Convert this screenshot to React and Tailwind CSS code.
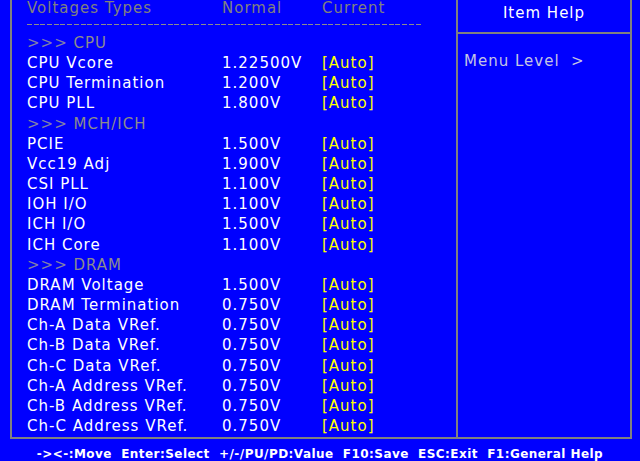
const ROWS = [
  { section: 'CPU' },
  { name: 'CPU Vcore', normal: '1.22500V' },
  { name: 'CPU Termination', normal: '1.200V' },
  { name: 'CPU PLL', normal: '1.800V' },
  { section: 'MCH/ICH' },
  { name: 'PCIE', normal: '1.500V' },
  { name: 'Vcc19 Adj', normal: '1.900V' },
  { name: 'CSI PLL', normal: '1.100V' },
  { name: 'IOH I/O', normal: '1.100V' },
  { name: 'ICH I/O', normal: '1.500V' },
  { name: 'ICH Core', normal: '1.100V' },
  { section: 'DRAM' },
  { name: 'DRAM Voltage', normal: '1.500V' },
  { name: 'DRAM Termination', normal: '0.750V' },
  { name: 'Ch-A Data VRef.', normal: '0.750V' },
  { name: 'Ch-B Data VRef.', normal: '0.750V' },
  { name: 'Ch-C Data VRef.', normal: '0.750V' },
  { name: 'Ch-A Address VRef.', normal: '0.750V' },
  { name: 'Ch-B Address VRef.', normal: '0.750V' },
  { name: 'Ch-C Address VRef.', normal: '0.750V' },
];

const App = () => {
  return (
    <div className="w-[640px] h-[461px] overflow-hidden bg-[#0000ff] font-['DejaVu_Sans',sans-serif] text-[15px] tracking-[1px] text-white">
      {/* Main frame, top edge sits above the visible area */}
      <div className="ml-[10px] w-[622px] h-[439px] flex border-x-2 border-b-2 border-[#808080]">
        {/* Settings list */}
        <div className="w-[444px] pl-[15px]">
          <div className="flex h-[17px] leading-[17px] text-[#808080]">
            <span className="w-[195px]">Voltages Types</span>
            <span className="w-[100px]">Normal</span>
            <span>Current</span>
          </div>
          <div className="mt-[7px] w-[395px] h-px bg-[repeating-linear-gradient(90deg,#8c8c8c_0_5px,transparent_5px_6.7px)]" />
          <div className="mt-[8px]">
            {ROWS.map((row, i) =>
              row.section ? (
                <div key={i} className="h-[20.16px] leading-[20px] text-[#8080a8]">
                  &gt;&gt;&gt; <span className="text-[#8c8c8c]">{row.section}</span>
                </div>
              ) : (
                <div key={i} className="flex h-[20.16px] leading-[20px]">
                  <span className="w-[195px]">{row.name}</span>
                  <span className="w-[100px]">{row.normal}</span>
                  <span className="text-[#ffff00]">[Auto]</span>
                </div>
              )
            )}
          </div>
        </div>

        {/* Help panel */}
        <div className="flex-1 border-l-2 border-[#808080]">
          <div className="h-[32px] flex items-center justify-center pb-[6px]">Item Help</div>
          <div className="h-[2px] bg-[#808080]" />
          <div className="pl-[6px] pt-[16px] text-[#c4c4e4]">
            Menu Level&nbsp;&nbsp;&gt;
          </div>
        </div>
      </div>

      {/* Key legend */}
      <div className="h-[22px] flex items-center justify-center font-bold text-[12px] tracking-[0.45px] whitespace-pre pt-[7px]">
        {'-><-:Move  Enter:Select  +/-/PU/PD:Value  F10:Save  ESC:Exit  F1:General Help'}
      </div>
    </div>
  );
};

export default App;
